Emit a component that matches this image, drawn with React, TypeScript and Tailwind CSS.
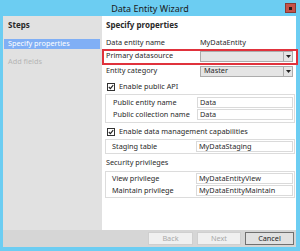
import React from "react";

const font = { fontFamily: '"Noto Sans", "Open Sans", sans-serif' };

function Check() {
  return (
    <div className="w-[8px] h-[8px] border border-[#333] bg-white flex items-center justify-center mr-[4px]">
      <svg width="6" height="6" viewBox="0 0 6 6">
        <path d="M0.8 3 L2.4 4.6 L5.2 1.2" stroke="#222" strokeWidth="1.1" fill="none" />
      </svg>
    </div>
  );
}

function Dropdown({ value }: { value?: string }) {
  return (
    <div className="w-[93px] h-[11px] border border-[#acacac] bg-[#e5e5e5] flex items-stretch">
      <div className="flex-1 pl-[3px] flex items-center leading-none">{value}</div>
      <div className="w-[9px] border-l border-[#acacac] flex items-center justify-center">
        <svg width="5" height="3" viewBox="0 0 5 3">
          <path d="M0 0 L5 0 L2.5 3 Z" fill="#222" />
        </svg>
      </div>
    </div>
  );
}

function GroupRow({ label, value }: { label: string; value: string }) {
  return (
    <div className="flex items-center h-[11px]">
      <div className="w-[89px] pl-[5px] leading-none">{label}</div>
      <div className="flex-1 h-[11px] border border-[#dadada] bg-white pl-[2px] flex items-center leading-none">
        {value}
      </div>
    </div>
  );
}

export default function App() {
  return (
    <div className="w-[300px] h-[251px] bg-[#6ccdf2] flex flex-col text-[#2a2a2a] text-[7.3px] relative" style={font}>
      <div className="h-[16px] relative flex items-center justify-center">
        <span className="text-[9px] text-[#1a1a1a] leading-none">Data Entity Wizard</span>
        <div className="absolute right-[4px] top-[3px] w-[11px] h-[10px] bg-[#c6534a] border border-[#8a3a33] flex items-center justify-center">
          <div className="w-[3px] h-[3px] bg-[#2a1a1a]" />
        </div>
      </div>
      <div className="flex-1 flex flex-col ml-[3px] mr-[4px]">
        <div className="flex-1 flex">
          <div className="w-[99px] bg-[#e1e1e1] flex flex-col pt-[3px]">
            <div className="h-[12px] pl-[5px] flex items-center font-bold text-[8px] leading-none">Steps</div>
            <div className="mt-[8px] h-[10px] ml-[1px] mr-[2px] bg-[#80aff5] text-white pl-[4px] flex items-center leading-none">
              Specify properties
            </div>
            <div className="mt-[8px] h-[10px] pl-[5px] text-[#b5b5b5] flex items-center leading-none">Add fields</div>
          </div>
          <div className="flex-1 bg-white flex flex-col pt-[3px] pl-[3px] pr-[1px]">
            <div className="h-[12px] pl-[1px] flex items-center font-bold text-[8px] leading-none">Specify properties</div>
            <div className="mt-[6px] h-[12px] flex items-center">
              <div className="w-[95px] pl-[1px] leading-none">Data entity name</div>
              <div className="leading-none">MyDataEntity</div>
            </div>
            <div className="mt-[1px] h-[12px] flex items-center">
              <div className="w-[95px] pl-[1px] leading-none">Primary datasource</div>
              <Dropdown />
            </div>
            <div className="mt-[3px] h-[12px] flex items-center">
              <div className="w-[95px] pl-[1px] leading-none">Entity category</div>
              <Dropdown value="Master" />
            </div>
            <div className="mt-[4px] h-[12px] flex items-center pl-[2px]">
              <Check />
              <div className="leading-none">Enable public API</div>
            </div>
            <div className="mt-[1px] border border-[#dcdcdc] p-[2px] pr-[1px] flex flex-col gap-[1px]">
              <GroupRow label="Public entity name" value="Data" />
              <GroupRow label="Public collection name" value="Data" />
            </div>
            <div className="mt-[3px] h-[12px] flex items-center pl-[2px]">
              <Check />
              <div className="leading-none">Enable data management capabilities</div>
            </div>
            <div className="mt-[1px] border border-[#dcdcdc] p-[1px] pr-[1px] flex flex-col">
              <GroupRow label="Staging table" value="MyDataStaging" />
            </div>
            <div className="mt-[3px] h-[12px] flex items-center pl-[1px] leading-none">Security privileges</div>
            <div className="mt-[2px] border border-[#dcdcdc] p-[1px] pr-[1px] flex flex-col gap-[1px]">
              <GroupRow label="View privilege" value="MyDataEntityView" />
              <GroupRow label="Maintain privilege" value="MyDataEntityMaintain" />
            </div>
          </div>
        </div>
        <div className="h-[17px] bg-[#d6d6d6] flex items-center justify-end gap-[4px] pr-[2px]">
          <div className="w-[45px] h-[13px] border border-[#cfcfcf] bg-[#f0f0f0] text-[#a8a8a8] flex items-center justify-center leading-none">Back</div>
          <div className="w-[44px] h-[13px] border border-[#cfcfcf] bg-[#f0f0f0] text-[#a8a8a8] flex items-center justify-center leading-none">Next</div>
          <div className="w-[49px] h-[13px] border border-[#707070] bg-[#e1e1e1] text-[#1e1e1e] flex items-center justify-center leading-none">Cancel</div>
        </div>
      </div>
      <div className="h-[4px]" />
      <div className="absolute left-[102px] top-[49px] w-[196px] h-[16px] border-2 border-[#e0323c] pointer-events-none" />
    </div>
  );
}
